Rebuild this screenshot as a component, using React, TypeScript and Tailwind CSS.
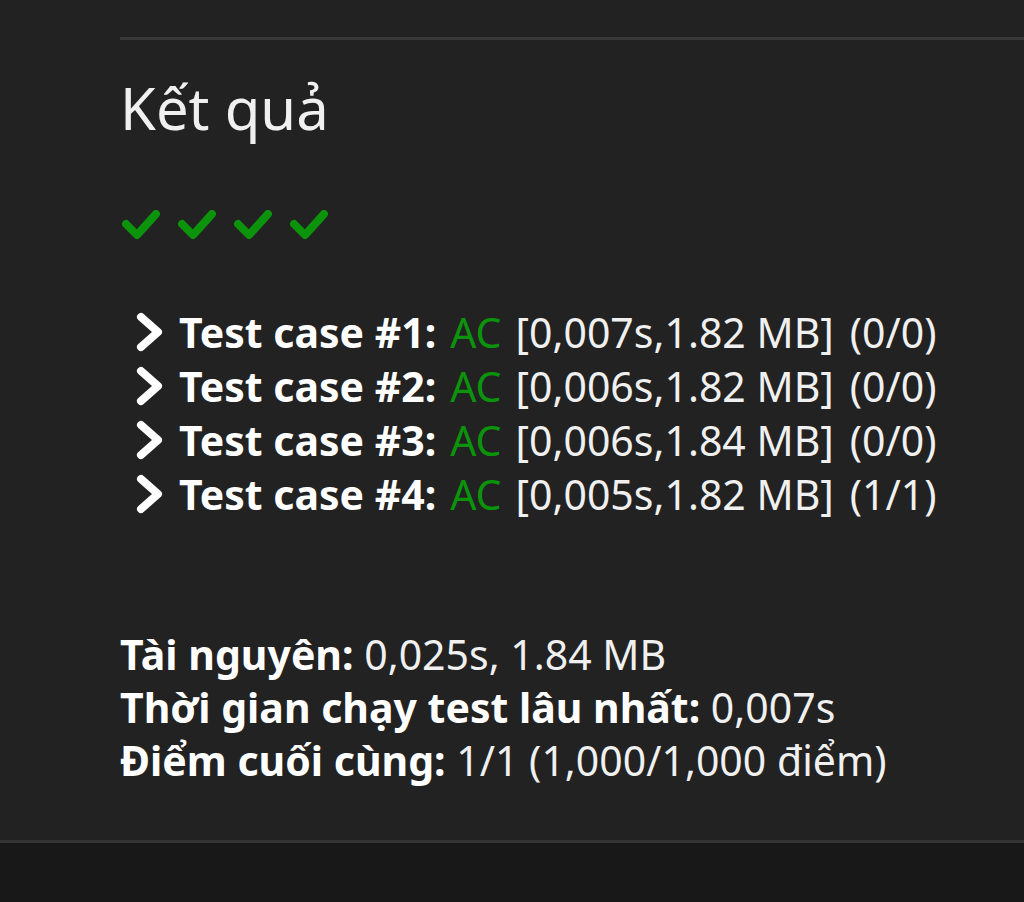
const cases = [
  { id: 1, time: "0,007s", mem: "1.82 MB", pts: "(0/0)" },
  { id: 2, time: "0,006s", mem: "1.82 MB", pts: "(0/0)" },
  { id: 3, time: "0,006s", mem: "1.84 MB", pts: "(0/0)" },
  { id: 4, time: "0,005s", mem: "1.82 MB", pts: "(1/1)" },
];

const CheckMark = () => (
  <svg width="40" height="32" viewBox="0 0 40 32" fill="none">
    <polyline
      points="4,14 15,25 34,4"
      stroke="#0c930c"
      strokeWidth="8"
      strokeLinecap="round"
      strokeLinejoin="round"
    />
  </svg>
);

const Chevron = () => (
  <svg width="30" height="42" viewBox="0 0 30 42" fill="none" className="mr-[14px] shrink-0">
    <polyline
      points="6,6 23,21 6,36"
      stroke="#ffffff"
      strokeWidth="8"
      strokeLinecap="round"
      strokeLinejoin="round"
    />
  </svg>
);

const App = () => {
  return (
    <div
      className="w-[1024px] h-[902px] overflow-hidden bg-[#222222] text-[#f0f0f0] flex flex-col"
      style={{ fontFamily: '"Noto Sans", "Open Sans", sans-serif' }}
    >
      <div className="flex-1 pl-[120px] pt-[37px]">
        <div className="h-[3px] bg-[#393939]" />
        <h2 className="mt-[36px] text-[58px] leading-[64px] font-normal">Kết quả</h2>

        {/* verdict icons */}
        <div className="mt-[70px] ml-[2px] flex gap-[16px]">
          {cases.map((c) => (
            <CheckMark key={c.id} />
          ))}
        </div>

        <div className="mt-[63px] pl-[15px] text-[41px] leading-[54px]">
          {cases.map((c) => (
            <div key={c.id} className="flex items-center whitespace-nowrap">
              <Chevron />
              <span className="font-bold text-white">Test case #{c.id}:</span>
              <span className="ml-[14px] text-[#0c930c]">AC</span>
              <span className="ml-[14px]">
                [{c.time},{c.mem}]
              </span>
              <span className="ml-[16px]">{c.pts}</span>
            </div>
          ))}
        </div>

        <div className="mt-[107px] text-[41px] leading-[53px]">
          <div>
            <span className="font-bold text-white">Tài nguyên:</span> 0,025s, 1.84 MB
          </div>
          <div>
            <span className="font-bold text-white">Thời gian chạy test lâu nhất:</span> 0,007s
          </div>
          <div>
            <span className="font-bold text-white">Điểm cuối cùng:</span> 1/1 (1,000/1,000 điểm)
          </div>
        </div>
      </div>
      <div className="h-[3px] bg-[#333333]" />
      <div className="h-[59px] bg-[#181818]" />
    </div>
  );
};

export default App;
